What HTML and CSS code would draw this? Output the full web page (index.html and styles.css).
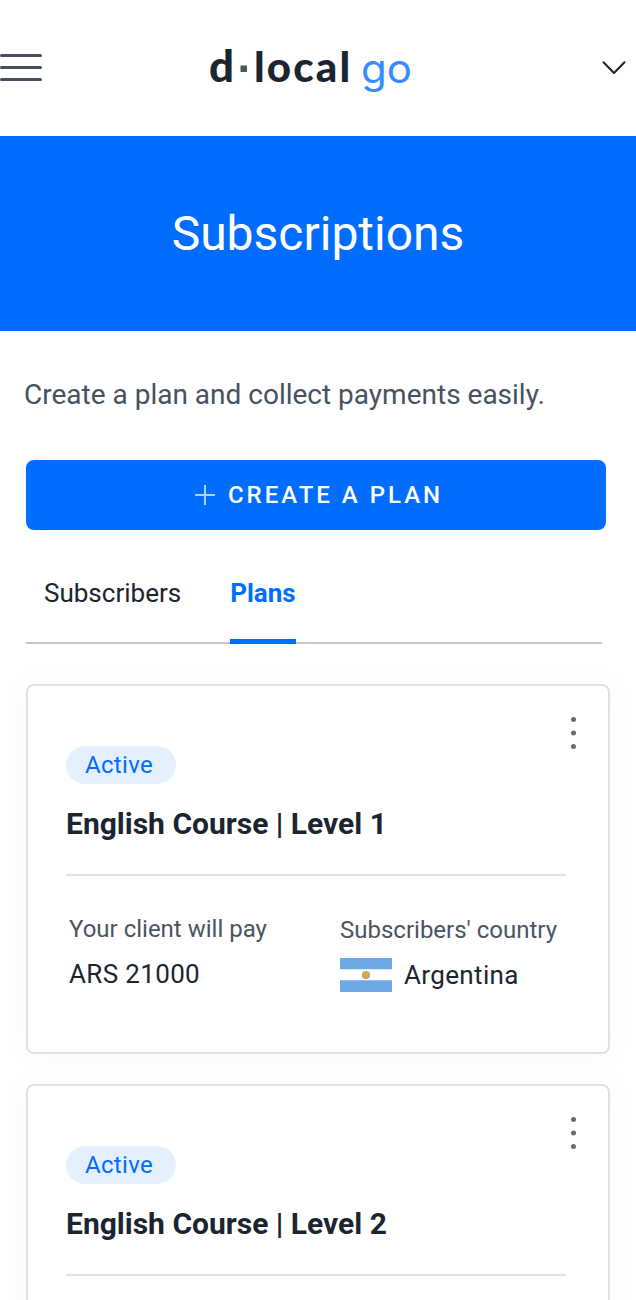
FILE: index.html
```html
<!DOCTYPE html>
<html lang="en">
<head>
<meta charset="utf-8">
<title>Subscriptions</title>
<link rel="stylesheet" href="styles.css">
</head>
<body>
<header class="topbar">
  <svg class="menu" width="42" height="28" viewBox="0 0 42 28" fill="none" stroke="#454f5e" stroke-width="3" stroke-linecap="round"><path d="M1.5 1.5H40.5M1.5 13.5H40.5M1.5 25.5H40.5"/></svg>
  <svg class="logo" width="212" height="60" viewBox="0 0 212 60">
    <text class="logo-dark" x="2" y="42" textLength="25" lengthAdjust="spacingAndGlyphs">d</text>
    <rect x="33.500" y="25.500" width="6.500" height="6.500" fill="#4b5461"/>
    <text class="logo-dark logo-word" x="47" y="42">local</text>
    <text class="logo-go" x="154" y="43" textLength="51" lengthAdjust="spacingAndGlyphs">go</text>
  </svg>
  <svg class="chevron" width="24" height="14" viewBox="0 0 24 14" fill="none" stroke="#1b2530" stroke-width="2" stroke-linecap="round" stroke-linejoin="round"><path d="M1.5 1.2L12 12L22.500 1.200"/></svg>
</header>
<section class="hero"><h1 class="hero-title">Subscriptions</h1></section>
<main class="content">
  <p class="intro">Create a plan and collect payments easily.</p>
  <button class="create">
    <svg width="20" height="20" viewBox="0 0 20 20" stroke="#b0d1ff" stroke-width="2"><path d="M10 0V20M0 10H20"/></svg>
    <span class="create-label">CREATE A PLAN</span>
  </button>
  <nav class="tabs">
    <a class="tab">Subscribers</a>
    <a class="tab tab-active">Plans</a>
  </nav>
  <div class="cards">
    <article class="card">
      <svg class="more" width="6" height="34" viewBox="0 0 6 34" fill="#646d77"><circle cx="3.500" cy="3.500" r="2.500"/><circle cx="3.500" cy="17" r="2.500"/><circle cx="3.500" cy="30.500" r="2.500"/></svg>
      <span class="badge">Active</span>
      <h2 class="card-title">English Course | Level 1</h2>
      <div class="details">
        <div class="detail">
          <span class="label">Your client will pay</span>
          <span class="value">ARS 21000</span>
        </div>
        <div class="detail detail-country">
          <span class="label">Subscribers' country</span>
          <span class="value country">
            <svg width="52" height="34" viewBox="0 0 52 34"><path fill="#6fa7e7" d="M0 0H52V34H0z"/><path fill="#fff" d="M0 11.200H52V22.300H0z"/><circle cx="26" cy="17" r="3.500" fill="#eaa827" stroke="#a4a39b" stroke-width="1.200"/></svg>
            Argentina
          </span>
        </div>
      </div>
    </article>
    <article class="card">
      <svg class="more" width="6" height="34" viewBox="0 0 6 34" fill="#646d77"><circle cx="3.500" cy="3.500" r="2.500"/><circle cx="3.500" cy="17" r="2.500"/><circle cx="3.500" cy="30.500" r="2.500"/></svg>
      <span class="badge">Active</span>
      <h2 class="card-title">English Course | Level 2</h2>
      <div class="details"></div>
    </article>
  </div>
</main>
</body>
</html>
```
FILE: styles.css
```css
* { box-sizing: border-box; }
html, body { height: 1300px; overflow: hidden; }
body { margin: 0; background: #fff; color: #1b2530; font-family: Roboto, sans-serif; }
.topbar { height: 136px; display: flex; align-items: center; padding-right: 10px; }
.menu { display: block; }
.logo { margin: 4px 0 0 165px; }
.logo-dark { font: 900 43px Lato, sans-serif; fill: #1b2530; }
.logo-word { font-size: 42px; letter-spacing: 2.2px; }
.logo-go { font: 400 40px Inter, sans-serif; fill: #358bff; }
.chevron { margin-left: auto; }
.hero { height: 195px; background: #006dff; display: flex; align-items: center; justify-content: center; }
.hero-title { margin: 0; color: #fff; font-size: 48px; font-weight: 400; line-height: 56px; }
.content { padding: 44px 26px 0; }
.intro { margin: 0 0 0 -2px; color: #47515f; font-size: 28px; line-height: 40px; white-space: nowrap; }
.create { width: 580px; height: 70px; margin-top: 45px; padding: 0 0 0 6px; border: 0; border-radius: 8px; background: #006dff; color: #fff; display: flex; align-items: center; justify-content: center; gap: 13px; font: 500 24px/28px Roboto, sans-serif; letter-spacing: 3px; }
.tabs { width: 576px; height: 94px; margin-top: 20px; padding-left: 18px; display: flex; gap: 49px; align-items: flex-start; border-bottom: 2px solid #c3c8ce; }
.tab { height: 94px; padding-top: 28px; font-size: 26px; line-height: 30px; }
.tab-active { color: #006dff; font-weight: 700; border-bottom: 5px solid #006dff; }
.cards { margin-top: 40px; display: flex; flex-direction: column; gap: 30px; }
.card { width: 584px; height: 370px; padding: 60px 42px 0 38px; border: 2px solid #dee2e6; border-radius: 8px; background: #fff; box-shadow: 0 0 32px rgba(0, 0, 0, .03); position: relative; }
.more { position: absolute; top: 30px; right: 32px; }
.badge { display: flex; align-items: center; justify-content: center; width: 110px; height: 38px; border-radius: 19px; background: #e5f0ff; color: #006dff; font-size: 24px; letter-spacing: .35px; padding-right: 4px; }
.card-title { margin: 22px 0 0; font-size: 30px; line-height: 36px; font-weight: 700; white-space: nowrap; }
.details { margin-top: 32px; border-top: 2px solid #dee2e6; padding-top: 39px; display: flex; }
.detail { flex: 0 0 271px; padding-left: 3px; display: flex; flex-direction: column; gap: 16px; white-space: nowrap; }
.detail-country { flex-basis: 226px; padding: 1px 0 0 3px; }
.label { color: #4b5461; font-size: 24px; line-height: 28px; }
.value { font-size: 26px; line-height: 34px; margin-top: -2px; letter-spacing: .35px; }
.country { display: flex; align-items: center; gap: 12px; }
```
